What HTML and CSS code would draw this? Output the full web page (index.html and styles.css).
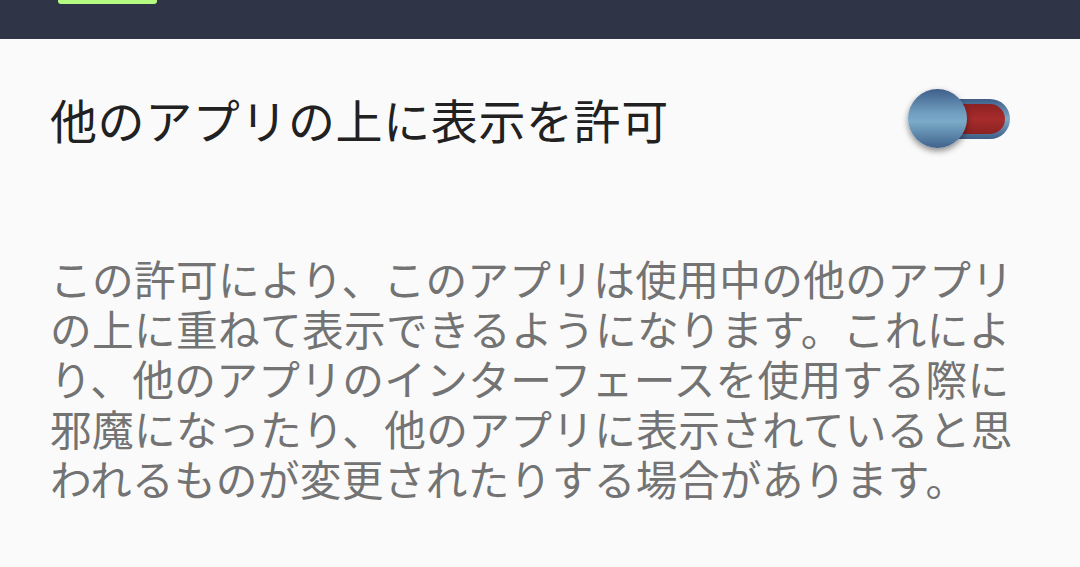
FILE: index.html
```html
<!DOCTYPE html>
<html lang="ja">
<head>
<meta charset="utf-8">
<link rel="stylesheet" href="styles.css">
</head>
<body>
<header class="topbar"><div class="tab"></div></header>
<main class="content">
  <div class="row">
    <h1 class="title">他のアプリの上に表示を許可</h1>
    <div class="switch">
      <div class="track"><div class="track-inner"></div></div>
      <div class="thumb"></div>
    </div>
  </div>
  <p class="desc">この許可により、このアプリは使用中の他のアプリの上に重ねて表示できるようになります。これにより、他のアプリのインターフェースを使用する際に邪魔になったり、他のアプリに表示されていると思われるものが変更されたりする場合があります。</p>
</main>
</body>
</html>
```
FILE: styles.css
```css
html, body { margin: 0; padding: 0; }
body {
  width: 1080px; height: 567px; overflow: hidden;
  background: #fafafa;
  font-family: "Noto Sans CJK JP", "Noto Sans", sans-serif;
}
.topbar {
  height: 39px; background: #2f3447; position: relative;
}
.tab {
  position: absolute; left: 58px; top: 0; width: 99px; height: 4px;
  background: #b5fb82; border-radius: 0 0 3px 3px;
}
.content { padding: 0 50px; }
.row {
  display: flex; align-items: center; justify-content: space-between;
  height: 160px;
}
.title {
  margin: 0 0 2px 0; font-size: 47px; font-weight: 400; color: #212121;
  line-height: 1; letter-spacing: 0.6px;
}
.switch { position: relative; width: 102px; height: 60px; margin-right: 20px; }
.track {
  position: absolute; right: 0; top: 10px; width: 70px; height: 40px;
  border-radius: 20px; box-sizing: border-box; padding: 5px;
  background: linear-gradient(#3d5d87, #7da9c8 50%, #3d5d87);
}
.track-inner {
  width: 100%; height: 100%; border-radius: 15px;
  background: linear-gradient(#8c2222, #a82c2c 50%, #8c2222);
}
.thumb {
  position: absolute; left: 0; top: 0; width: 59px; height: 59px; border-radius: 50%;
  background: linear-gradient(#3f5f8a, #6f9dbf 40%, #7aabc8 55%, #41628c);
  box-shadow: 0 3px 6px rgba(0,0,0,0.45);
}
.desc {
  margin: 54px 0 0 0; font-size: 41.7px; line-height: 50px; color: #737373;
  letter-spacing: 0.3px;
}
```
